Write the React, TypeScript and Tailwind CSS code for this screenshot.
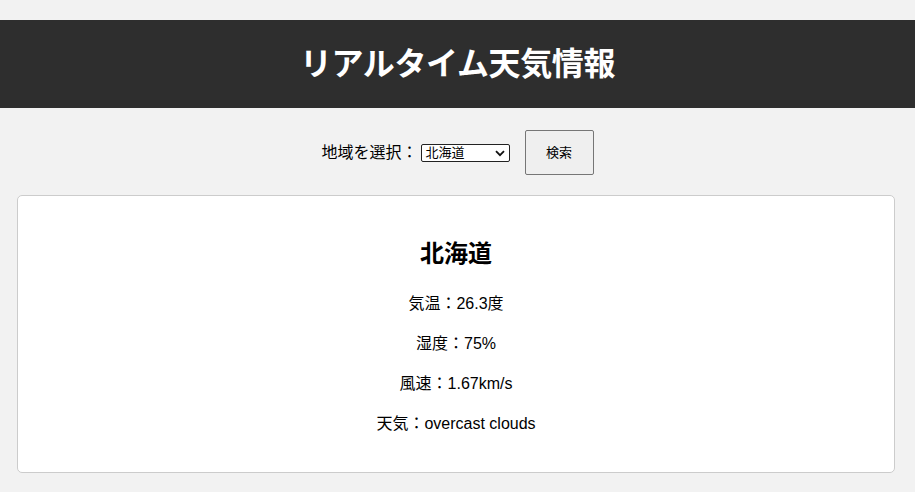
import React from "react";

export default function App() {
  const font = { fontFamily: '"Liberation Sans", "Noto Sans CJK JP", sans-serif' };
  return (
    <div className="min-h-[492px] bg-[#f2f2f2] pt-[20px] pb-[20px] text-black" style={font}>
      <header className="bg-[#2e2e2e] h-[88px] flex items-center justify-center">
        <h1 className="text-white text-[32px] font-bold leading-[40px] m-0 tracking-[-0.4px]">リアルタイム天気情報</h1>
      </header>
      <div className="mt-[22px] h-[45px] flex items-center justify-center">
        <label className="text-[16px] leading-[20px] mr-[3px]">地域を選択：</label>
        <div className="relative w-[89px] h-[18px] border border-[#222] rounded-[2px] bg-white flex items-center">
          <span className="text-[13px] leading-[16px] pl-[4px]">北海道</span>
          <svg className="absolute right-[4px] top-[5px]" width="10" height="7" viewBox="0 0 10 7">
            <path d="M1 1.2 L5 5.2 L9 1.2" fill="none" stroke="#111" strokeWidth="1.8" />
          </svg>
        </div>
        <button className="ml-[15px] w-[69px] h-[45px] bg-[#efefef] border border-[#767676] rounded-[2px] text-[13px]">
          検索
        </button>
      </div>
      <div className="mt-[20px] ml-[17px] w-[878px] bg-white border border-[#cccccc] rounded-[5px] px-[20px] pt-[20px] pb-[20px] text-center">
        <h2 className="text-[24px] font-bold leading-[36px] mt-[20px] mb-[20px]">北海道</h2>
        <p className="text-[16px] leading-[24px] mb-[16px]">気温：26.3度</p>
        <p className="text-[16px] leading-[24px] mb-[16px]">湿度：75%</p>
        <p className="text-[16px] leading-[24px] mb-[16px]">風速：1.67km/s</p>
        <p className="text-[16px] leading-[24px] mb-[16px]">天気：overcast clouds</p>
      </div>
    </div>
  );
}
